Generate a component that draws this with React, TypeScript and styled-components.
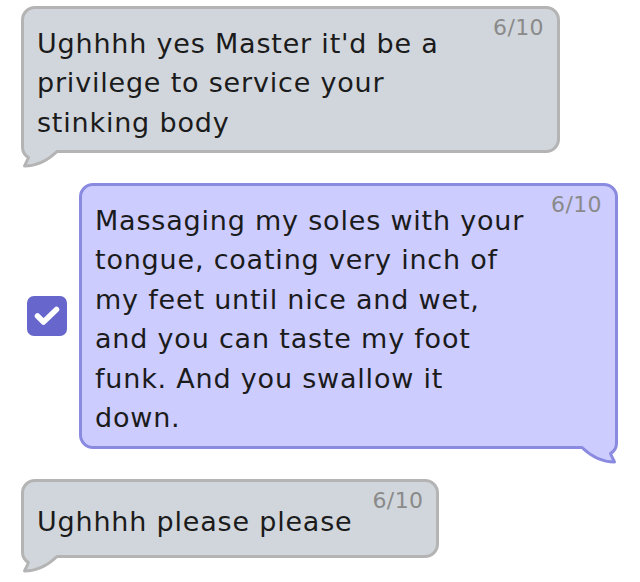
import React from "react";
import styled, { createGlobalStyle } from "styled-components";

const GlobalStyle = createGlobalStyle`
  html, body { margin: 0; padding: 0; background: #ffffff; }
  body { font-family: "DejaVu Sans", "Liberation Sans", sans-serif; }
`;

const Thread = styled.div`
  display: flex;
  flex-direction: column;
  gap: 30px;
  padding: 6px 0 30px;
`;

const Row = styled.div<{ $mine?: boolean }>`
  display: flex;
  align-items: center;
  gap: 12px;
  justify-content: ${(p) => (p.$mine ? "flex-end" : "flex-start")};
  padding: ${(p) => (p.$mine ? "0 22px 0 0" : "0 0 0 21px")};
`;

const Bubble = styled.div<{ $mine?: boolean }>`
  position: relative;
  box-sizing: border-box;
  display: flex;
  align-items: flex-start;
  max-width: 539px;
  min-height: 79px;
  padding: 14.5px 13px 8px 13px;
  border: 3px solid ${(p) => (p.$mine ? "#8a8ae0" : "#b4b4b4")};
  border-radius: 14px;
  background: ${(p) => (p.$mine ? "#ccccff" : "#d1d6dc")};
`;

const Body = styled.div`
  position: relative;
  align-self: center;
  flex: 1 1 auto;
  font-size: 27px;
  letter-spacing: 0.8px;
  line-height: 39.5px;
  color: #1b1b1b;
`;

const Counter = styled.div`
  position: relative;
  flex: 0 0 auto;
  margin-left: 20px;
  margin-top: -6.5px;
  font-size: 22px;
  letter-spacing: 0.4px;
  line-height: 22px;
  color: #8a8a8a;
`;

const TailSvg = styled.svg<{ $mine?: boolean }>`
  position: absolute;
  bottom: -19px;
  ${(p) => (p.$mine ? "right: -3px; transform: scaleX(-1);" : "left: -3px;")}
  width: 48px;
  height: 36px;
  overflow: visible;
`;

const Check = styled.div`
  flex: 0 0 auto;
  width: 40px;
  height: 40px;
  border-radius: 7px;
  background: #6666cc;
  display: flex;
  align-items: center;
  justify-content: center;
`;

function Tail({ mine }: { mine?: boolean }) {
  const fill = mine ? "#ccccff" : "#d1d6dc";
  const stroke = mine ? "#8a8ae0" : "#b4b4b4";
  const outline = "M1.5,0 L1.5,14 Q1.5,21 7.5,24.5 Q5.5,29 3.5,33 Q21,33 36,18.5 L48,18.5";
  return (
    <TailSvg $mine={mine} viewBox="0 0 48 36" aria-hidden="true">
      <path d={outline + " L48,0 Z"} fill={fill} stroke="none" />
      <path
        d={outline}
        fill="none"
        stroke={stroke}
        strokeWidth={3}
        strokeLinejoin="round"
        strokeLinecap="round"
      />
    </TailSvg>
  );
}

function Message({ text, mine }: { text: string; mine?: boolean }) {
  return (
    <Bubble $mine={mine}>
      <Tail mine={mine} />
      <Body>{text}</Body>
      <Counter>6/10</Counter>
    </Bubble>
  );
}

export default function App() {
  return (
    <>
      <GlobalStyle />
      <Thread>
        <Row>
          <Message text="Ughhhh yes Master it'd be a privilege to service your stinking body" />
        </Row>
        <Row $mine>
          <Check>
            <svg width="40" height="40" viewBox="0 0 40 40" aria-hidden="true">
              <polyline
                points="10.5,20 16.5,26 29.5,13.5"
                fill="none"
                stroke="#ffffff"
                strokeWidth={5.5}
                strokeLinecap="round"
                strokeLinejoin="round"
              />
            </svg>
          </Check>
          <Message
            mine
            text="Massaging my soles with your tongue, coating very inch of my feet until nice and wet, and you can taste my foot funk. And you swallow it down."
          />
        </Row>
        <Row>
          <Message text="Ughhhh please please" />
        </Row>
      </Thread>
    </>
  );
}
